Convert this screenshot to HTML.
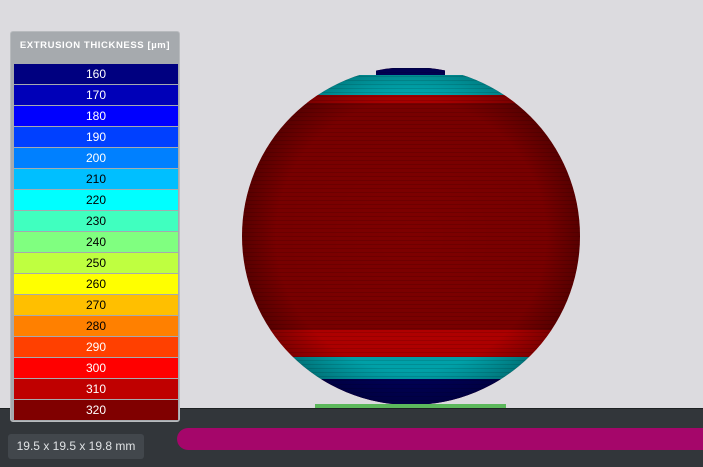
<!DOCTYPE html><html><head><style>
body{margin:0;width:703px;height:466px;overflow:hidden;background:#dcdbdf;font-family:"Liberation Sans",sans-serif;position:relative}
.ground{position:absolute;left:0;top:408px;width:703px;height:58px;background:#32363a;border-top:1px solid #1e2123}
.panel{position:absolute;left:10px;top:31px;width:170px;height:391px;background:#a6aaae;border:1px solid #b8bbbe;border-radius:3px;box-sizing:border-box}
.title{position:absolute;left:0;top:8px;width:100%;text-align:center;color:#fff;font-size:9.5px;font-weight:bold;letter-spacing:.6px}
.row{position:absolute;left:3px;width:164px;height:20px;line-height:20px;text-align:center;font-size:12px}
.dim{position:absolute;left:8px;top:434px;width:136px;height:25px;background:#42474c;border-radius:3px;color:#dfe2e4;font-size:12px;line-height:25px;text-align:center}
.bar{position:absolute;left:177px;top:428px;width:540px;height:22px;background:#a5066a;border-radius:11px}
</style></head><body>
<svg width="703" height="466" style="position:absolute;left:0;top:0">
<defs>
<clipPath id="c"><circle cx="411" cy="236" r="169"/></clipPath>
<radialGradient id="sh" cx="0.5" cy="0.5" r="0.5">
<stop offset="0" stop-color="#000" stop-opacity="0"/><stop offset="0.8" stop-color="#000" stop-opacity="0.05"/><stop offset="1" stop-color="#000" stop-opacity="0.3"/></radialGradient>
<pattern id="st" width="4" height="4" patternUnits="userSpaceOnUse"><rect width="4" height="1" fill="#000" opacity="0.12"/></pattern>
</defs>
<g clip-path="url(#c)">
<rect x="240" y="60" width="345" height="350" fill="#7e0000"/>
<rect x="240" y="60" width="345" height="15" fill="#000070"/>
<rect x="240" y="75" width="345" height="20" fill="#00b8c0"/>
<rect x="240" y="95" width="345" height="8" fill="#b00000"/>
<rect x="240" y="330" width="345" height="27" fill="#b50000"/>
<rect x="240" y="357" width="345" height="22" fill="#00a8b0"/>
<rect x="240" y="379" width="345" height="30" fill="#00005e"/>
<rect x="240" y="60" width="345" height="350" fill="url(#st)"/>
<circle cx="411" cy="236" r="169" fill="url(#sh)"/>
</g>
<rect x="0" y="60" width="703" height="8" fill="#dcdbdf"/>
<rect x="0" y="60" width="376" height="15" fill="#dcdbdf"/><rect x="445" y="60" width="260" height="15" fill="#dcdbdf"/>
<rect x="315" y="404" width="191" height="4" fill="#5cb85c"/>
</svg>
<div class="ground"></div>
<div class="panel"><div class="title">EXTRUSION THICKNESS [µm]</div>
<div class="row" style="top:32px;background:#000080;color:#fff">160</div>
<div class="row" style="top:53px;background:#0000b8;color:#fff">170</div>
<div class="row" style="top:74px;background:#0000ff;color:#fff">180</div>
<div class="row" style="top:95px;background:#0040ff;color:#fff">190</div>
<div class="row" style="top:116px;background:#0080ff;color:#fff">200</div>
<div class="row" style="top:137px;background:#00bfff;color:#000">210</div>
<div class="row" style="top:158px;background:#00ffff;color:#000">220</div>
<div class="row" style="top:179px;background:#40ffbf;color:#000">230</div>
<div class="row" style="top:200px;background:#80ff80;color:#000">240</div>
<div class="row" style="top:221px;background:#bfff40;color:#000">250</div>
<div class="row" style="top:242px;background:#ffff00;color:#000">260</div>
<div class="row" style="top:263px;background:#ffbf00;color:#000">270</div>
<div class="row" style="top:284px;background:#ff8000;color:#000">280</div>
<div class="row" style="top:305px;background:#ff4000;color:#fff">290</div>
<div class="row" style="top:326px;background:#ff0000;color:#fff">300</div>
<div class="row" style="top:347px;background:#bf0000;color:#fff">310</div>
<div class="row" style="top:368px;background:#800000;color:#fff">320</div>
</div>
<div class="dim">19.5 x 19.5 x 19.8 mm</div>
<div class="bar"></div>
</body></html>
